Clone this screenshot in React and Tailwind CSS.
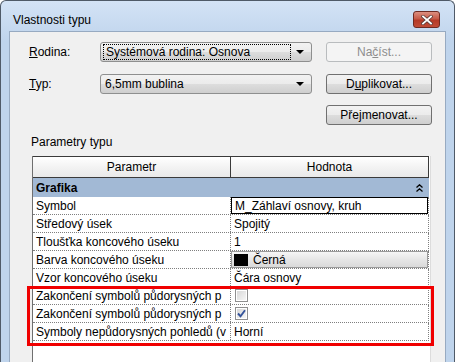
import React from 'react';

const btnBg = 'bg-[linear-gradient(#f2f2f2,#ebebeb_50%,#dddddd_50%,#cfcfcf)]';

function Arrow() {
    return (
        <svg width="8" height="4" viewBox="0 0 8 4" className="shrink-0">
            <path d="M0 0h8L4 4z" fill="#000" />
        </svg>
    );
}

function Combo({ value, focus }) {
    return (
        <div className={`w-[212px] h-[20px] rounded-[3px] border border-[#8e8f8f] ${btnBg} flex items-center pl-[2px] pr-[4px]`}>
            <div className={`flex-1 h-[16px] flex items-center pl-[2px] ${focus ? 'border border-dotted border-black' : ''}`}>
                {value}
            </div>
            <div className="w-[14px] flex justify-center ml-[2px]">
                <Arrow />
            </div>
        </div>
    );
}

function Button({ children, disabled }) {
    if (disabled) {
        return (
            <div className="w-[106px] h-[20px] rounded-[3px] border border-[#b9bcbe] bg-[#f4f4f4] text-[#8d8d8d] flex items-center justify-center">
                {children}
            </div>
        );
    }
    return (
        <div className={`w-[106px] h-[20px] rounded-[3px] border border-[#707070] ${btnBg} flex items-center justify-center`}>
            {children}
        </div>
    );
}

function CheckBox({ checked }) {
    return (
        <div className="w-[13px] h-[13px] border border-[#8f8f8f] bg-white p-[1px]">
            <div className="w-full h-full bg-[linear-gradient(135deg,#d8d8d8,#f6f6f6)] flex items-center justify-center">
                {checked && (
                    <svg width="9" height="9" viewBox="0 0 9 9">
                        <path d="M1 4.5L3.5 7.2L8 1.2" fill="none" stroke="#34539a" strokeWidth="1.9" />
                    </svg>
                )}
            </div>
        </div>
    );
}

function Row({ name, children, valueClass }) {
    return (
        <div className="w-[396px] flex h-[18px] border-b border-r border-dotted border-[#7f7f7f]">
            <div className="w-[198px] shrink-0 border-r border-dotted border-[#7f7f7f] pl-[3px] flex items-center overflow-hidden whitespace-nowrap">
                {name}
            </div>
            <div className={`flex-1 flex items-center ${valueClass || 'pl-[3px]'}`}>{children}</div>
        </div>
    );
}

function CloseButton() {
    return (
        <div className="w-[27px] h-[17px] mt-[10px] rounded-[3px] border border-[#6e2a22] bg-[linear-gradient(#dc8f80,#c65a48_45%,#b53a27_55%,#c14c37)] flex items-center justify-center">
            <svg width="12" height="10" viewBox="0 0 12 10">
                <path d="M2 1.5L10 8.5M10 1.5L2 8.5" stroke="#5a3a36" strokeWidth="3.4" strokeLinecap="square" />
                <path d="M2 1.5L10 8.5M10 1.5L2 8.5" stroke="#fff" strokeWidth="1.8" strokeLinecap="square" />
            </svg>
        </div>
    );
}

export default function App() {
    return (
        <div className="w-[455px] h-[362px] overflow-hidden bg-white font-['Liberation_Sans',Arial,sans-serif] text-[12px] leading-[14px] text-black">
            <div className="h-full flex flex-col border border-b-0 border-[#4f5a68] rounded-t-[6px] bg-[linear-gradient(#d3e3f6,#bfd4ec_40px)]">
                <div className="h-[30px] shrink-0 flex items-start pl-[12px] pr-[14px]">
                    <span className="flex-1 pt-[12px]">Vlastnosti typu</span>
                    <CloseButton />
                </div>
                <div className="flex-1 min-h-0 mx-[8px] border border-b-0 border-[#97aac1] bg-[#f0f0f0] flex flex-col pl-[19px] pt-[10px]">
                    <div className="grid grid-cols-[71px_212px_14px_106px] gap-y-[12px]">
                        <div className="flex items-center">
                            <span><span className="underline">R</span>odina:</span>
                        </div>
                        <Combo value="Systémová rodina: Osnova" focus />
                        <div />
                        <Button disabled>
                            <span>Na<span className="underline">č</span>íst...</span>
                        </Button>

                        <div className="flex items-center">
                            <span><span className="underline">T</span>yp:</span>
                        </div>
                        <Combo value="6,5mm bublina" />
                        <div />
                        <Button>
                            <span>D<span className="underline">u</span>plikovat...</span>
                        </Button>
                    </div>
                    <div className="grid grid-cols-[71px_212px_14px_106px] mt-[11px]">
                        <div className="col-start-4">
                            <Button>
                                <span>Pře<span className="underline">j</span>menovat...</span>
                            </Button>
                        </div>
                    </div>

                    <div className="mt-[10px] ml-[2px]">Parametry typu</div>

                    <div className="mt-[7px] ml-[3px] w-[399px] flex-1 bg-white border-l border-r border-l-[#6f6f6f] border-r-[#dcdcdc] flex flex-col">
                        <div className="w-[396px] h-[22px] flex border-t border-b border-r border-[#3a3a3a] bg-[linear-gradient(#ffffff,#f3f3f3_50%,#e9e9e9)]">
                            <div className="w-[198px] border-r border-[#3a3a3a] flex items-center justify-center">Parametr</div>
                            <div className="flex-1 flex items-center justify-center">Hodnota</div>
                        </div>
                        <div className="w-[396px] h-[19px] bg-[#a2b9d5] flex items-center justify-between pl-[3px] pr-[6px]">
                            <span className="font-bold">Grafika</span>
                            <svg width="7" height="8" viewBox="0 0 7 8">
                                <path d="M0.5 3.5L3.5 0.8L6.5 3.5M0.5 7.5L3.5 4.8L6.5 7.5" fill="none" stroke="#000" strokeWidth="1.3" />
                            </svg>
                        </div>
                        <Row name="Symbol" valueClass="pl-[3px] self-stretch border border-black">
                            M_Záhlaví osnovy, kruh
                        </Row>
                        <Row name="Středový úsek">Spojitý</Row>
                        <Row name="Tloušťka koncového úseku">1</Row>
                        <Row name="Barva koncového úseku" valueClass="self-stretch pl-[2px] gap-[5px] border border-[#9a9a9a] bg-[linear-gradient(#f6f6f6,#e6e6e6_50%,#dadada)]">
                            <span className="w-[14px] h-[12px] bg-black" />
                            <span>Černá</span>
                        </Row>
                        <Row name="Vzor koncového úseku">Čára osnovy</Row>
                        <div className="relative">
                            <Row name="Zakončení symbolů půdorysných p" valueClass="pl-[4px]">
                                <CheckBox />
                            </Row>
                            <Row name="Zakončení symbolů půdorysných p" valueClass="pl-[4px]">
                                <CheckBox checked />
                            </Row>
                            <Row name="Symboly nepůdorysných pohledů (v">Horní</Row>
                            <div className="absolute -left-[6px] -right-[4px] -top-[1px] -bottom-[5px] border-[3px] border-[#f00000] pointer-events-none" />
                        </div>
                    </div>
                </div>
            </div>
        </div>
    );
}
